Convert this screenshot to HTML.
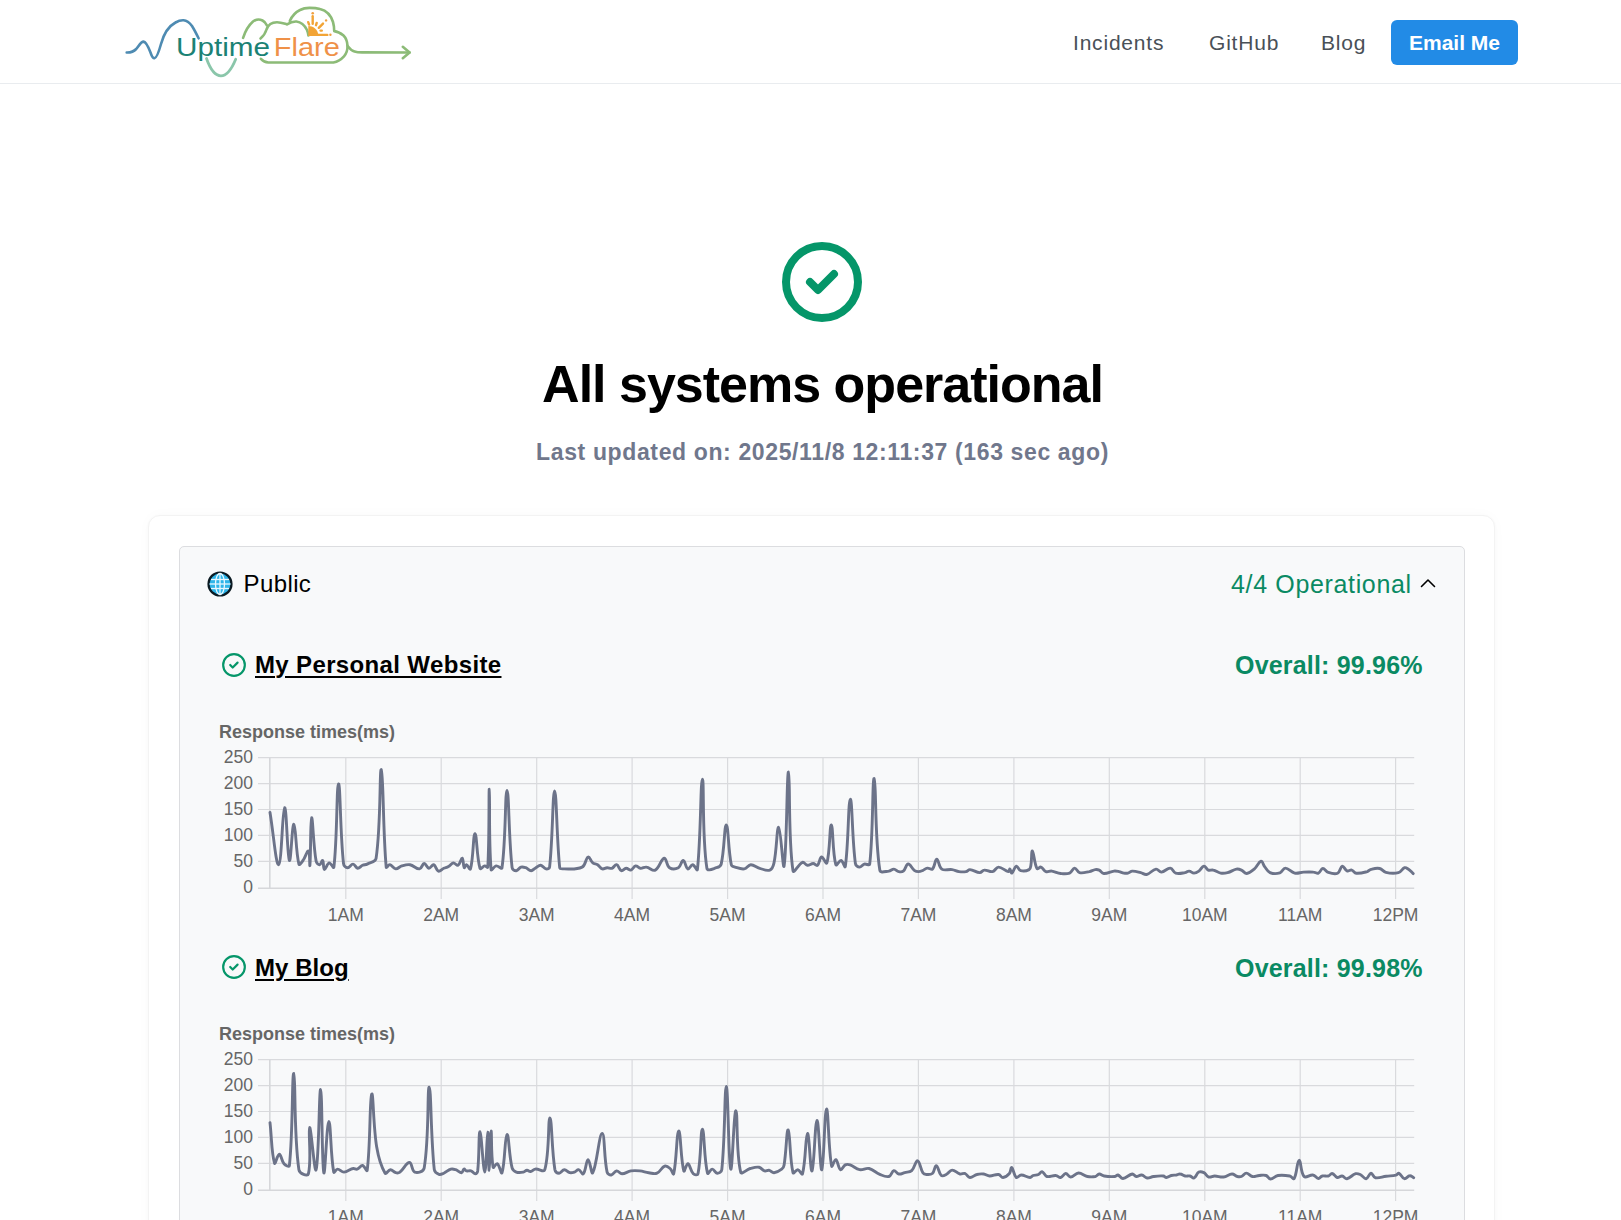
<!DOCTYPE html>
<html><head><meta charset="utf-8">
<style>
html,body{margin:0;padding:0;background:#fff;}
body{width:1621px;height:1220px;overflow:hidden;position:relative;font-family:"Liberation Sans",sans-serif;}
.t{position:absolute;white-space:nowrap;line-height:1;}
.hdr{position:absolute;left:0;top:0;width:1621px;height:83px;border-bottom:1px solid #e9ecef;background:#fff;}
.nav{font-size:21px;color:#495057;letter-spacing:0.8px;}
.btn{position:absolute;left:1391px;top:20px;width:127px;height:45px;background:#228be6;border-radius:6px;}
.card{position:absolute;left:148px;top:515px;width:1345px;height:800px;border-radius:12px;background:#fff;border:1px solid #f3f3f3;box-shadow:0 1px 3px rgba(0,0,0,0.03),0 0 14px rgba(0,0,0,0.025);}
.panel{position:absolute;left:179px;top:546px;width:1284px;height:800px;border-radius:5px;background:#f8f9fa;border:1px solid #dcdde0;}
svg{position:absolute;overflow:visible;}
</style></head>
<body>
<div class="hdr"></div>
<!-- logo placeholder -->
<svg id="logo" style="left:0;top:0" width="450" height="83" viewBox="0 0 450 83">
<text x="176" y="55.8" font-family="Liberation Sans, sans-serif" font-size="25.5" fill="#1b8275" textLength="94" lengthAdjust="spacingAndGlyphs">Uptime</text><text x="273.8" y="55.5" font-family="Liberation Sans, sans-serif" font-size="25" fill="#ef9148" textLength="66" lengthAdjust="spacingAndGlyphs">Flare</text>
<g fill="none" stroke-linecap="round" stroke-linejoin="round">
<path d="M126.7 52.5C130 52.6 133 52.4 136.2 49C139 45.5 141 41.6 143.5 41.6C146 41.8 148 46 150.5 52.5C152 57 153 58.5 154.5 58.3C156.5 58 158.5 53 161 44C164 33 169 26 175.5 22.5C179 20.5 181.5 20.2 183.5 20.3C186.5 20.5 189.5 22.5 192 26C194.5 30 196.5 34 198.6 38.3" stroke="#4e8bb2" stroke-width="2.6"/>
<path d="M206.5 58.5C209.5 67 213.5 75.8 220.9 75.8C228 75.8 232.5 67 235.7 59.2" stroke="#8ac6aa" stroke-width="2.8"/>
<g stroke="#8cbb77" stroke-width="2.6">
<path d="M243.1 37.8C245 32 249 25 253 21.5C256 19.2 259.5 19 262.5 20.5C264.5 21.5 266 23.2 266.8 25.2"/>
<path d="M260.5 38.5C263.5 36 265.5 33 266.5 29.5C268 25 272 22.2 277 22.2C281 22.2 284 23.5 287 24.4C290 22.5 293 21.3 296.4 21.5C301 22 305 26 307 30C308 32.5 308.4 34 308.4 35.5"/>
<path d="M289.8 21C292 16 296 12 300 10C303 8.4 306 7.9 309.5 7.9C313 7.9 316.5 8 320 9C326 10.5 331 15.5 333 22C334 25.5 334.2 28.5 334.2 31.1C337.5 31.4 340.5 33 343.5 35.5C346 38 347.3 41.5 347.5 45.9C347.6 50 346.5 53.5 344 56.3C341.5 59 338 61.5 333.4 62.5L268.3 62.5C265.5 62.3 263 61 260.9 58.8"/>
<path d="M347.5 45.9C349.5 48.5 351 50.5 354.5 51.5C357 52.3 359 52.4 362 52.4L409.6 52.5"/>
<path d="M402.8 46.8L409.6 52.5L402.8 58.2"/>
</g>
<g stroke="#f2a436" stroke-width="2.4">
<path d="M312.7 16.2L312.7 23.8"/><path d="M308.2 22.2L309.1 24.6"/><path d="M316.7 22.9L316 25.2"/><path d="M323 23.6L318.8 27.8"/><path d="M320.6 30.6L321.8 30.6"/><path d="M318 34.9L327.3 34.9"/>
</g>
</g>
<path d="M308.3 36L308.3 26C313 26 318.3 29 318.3 36Z" fill="#f2a436"/>
<g fill="#f0a040"><circle cx="312.7" cy="13.3" r="1.3"/><circle cx="326.1" cy="20.4" r="1.2"/><circle cx="330.4" cy="34.8" r="1.2"/></g>


</svg>

<div class="t nav" style="left:1073px;top:32px;">Incidents</div>
<div class="t nav" style="left:1209px;top:32px;">GitHub</div>
<div class="t nav" style="left:1321px;top:32px;">Blog</div>
<div class="btn"></div>
<div class="t" style="left:1409px;top:32px;font-size:21px;color:#fff;font-weight:bold;">Email Me</div>

<svg style="left:774px;top:234px" width="96" height="96" viewBox="0 0 24 24" fill="none" stroke="#059669" stroke-width="2" stroke-linecap="round" stroke-linejoin="round"><circle cx="12" cy="12" r="9"/><path d="M9 12l2 2l4 -4"/></svg>

<div class="t" style="left:0;width:1645px;text-align:center;top:358px;font-size:52px;font-weight:bold;color:#000;letter-spacing:-1px;">All systems operational</div>
<div class="t" style="left:1px;width:1643px;text-align:center;top:441px;font-size:23px;font-weight:bold;color:#70778c;letter-spacing:0.63px;">Last updated on: 2025/11/8 12:11:37 (163 sec ago)</div>

<div class="card"></div>
<div class="panel"></div>
<svg style="left:207px;top:571px" width="26" height="26" viewBox="0 0 26 26">
<circle cx="13" cy="13" r="11.5" fill="#2fb5e9" stroke="#0b1a22" stroke-width="2.2"/>
<g stroke="#e8f8ff" stroke-width="1.3" fill="none"><ellipse cx="13" cy="13" rx="4.5" ry="10.5"/><line x1="13" y1="2.5" x2="13" y2="23.5"/><line x1="2.5" y1="13" x2="23.5" y2="13"/><line x1="4" y1="8.5" x2="22" y2="8.5"/><line x1="4" y1="17.5" x2="22" y2="17.5"/></g>
</svg>
<div class="t" style="left:243.5px;top:572px;font-size:24px;color:#000;letter-spacing:0.4px;">Public</div>
<div class="t" style="left:1231px;top:572px;font-size:25px;color:#0a8a63;letter-spacing:0.65px;">4/4 Operational</div>
<svg style="left:1420px;top:578px" width="16" height="10" viewBox="0 0 16 10"><path d="M1.5 8.5L8 2l6.5 6.5" fill="none" stroke="#000" stroke-width="1.6" stroke-linecap="round" stroke-linejoin="round"/></svg>

<svg style="left:221px;top:652px" width="26" height="26" viewBox="0 0 24 24" fill="none" stroke="#059669" stroke-width="2" stroke-linecap="round" stroke-linejoin="round"><circle cx="12" cy="12" r="10"/><path d="M8.5 12l2.3 2.3l4.5 -4.5"/></svg>
<div class="t" style="left:255px;top:652.5px;font-size:24px;font-weight:bold;color:#000;letter-spacing:0.36px;text-decoration:underline;text-underline-offset:2.5px;text-decoration-thickness:2px;">My Personal Website</div>
<div class="t" style="left:1235px;top:653px;font-size:25px;font-weight:bold;color:#0a8a63;letter-spacing:0.19px;">Overall: 99.96%</div>
<div class="t" style="left:219px;top:722.5px;font-size:18px;font-weight:bold;color:#666;">Response times(ms)</div>

<svg style="left:221px;top:954px" width="26" height="26" viewBox="0 0 24 24" fill="none" stroke="#059669" stroke-width="2" stroke-linecap="round" stroke-linejoin="round"><circle cx="12" cy="12" r="10"/><path d="M8.5 12l2.3 2.3l4.5 -4.5"/></svg>
<div class="t" style="left:255px;top:955.5px;font-size:24px;font-weight:bold;color:#000;letter-spacing:0.05px;text-decoration:underline;text-underline-offset:2.5px;text-decoration-thickness:2px;">My Blog</div>
<div class="t" style="left:1235px;top:956px;font-size:25px;font-weight:bold;color:#0a8a63;letter-spacing:0.19px;">Overall: 99.98%</div>
<div class="t" style="left:219px;top:1024.5px;font-size:18px;font-weight:bold;color:#666;">Response times(ms)</div>


<!--CHARTS--><svg style="left:200px;top:745px" width="1250" height="200" viewBox="200 745 1250 200"><g stroke="#d9dadd" stroke-width="1.2" fill="none"><line x1="258" y1="757.7" x2="1414.2" y2="757.7"/><line x1="258" y1="783.6" x2="1414.2" y2="783.6"/><line x1="258" y1="809.5" x2="1414.2" y2="809.5"/><line x1="258" y1="835.4" x2="1414.2" y2="835.4"/><line x1="258" y1="861.4" x2="1414.2" y2="861.4"/><line x1="345.8" y1="757.7" x2="345.8" y2="899"/><line x1="441.2" y1="757.7" x2="441.2" y2="899"/><line x1="536.7" y1="757.7" x2="536.7" y2="899"/><line x1="632.1" y1="757.7" x2="632.1" y2="899"/><line x1="727.6" y1="757.7" x2="727.6" y2="899"/><line x1="823.0" y1="757.7" x2="823.0" y2="899"/><line x1="918.4" y1="757.7" x2="918.4" y2="899"/><line x1="1013.9" y1="757.7" x2="1013.9" y2="899"/><line x1="1109.3" y1="757.7" x2="1109.3" y2="899"/><line x1="1204.8" y1="757.7" x2="1204.8" y2="899"/><line x1="1300.2" y1="757.7" x2="1300.2" y2="899"/><line x1="1395.6" y1="757.7" x2="1395.6" y2="899"/></g><g stroke="#d6d7da" stroke-width="1.6" fill="none"><line x1="258" y1="888.2" x2="1414.2" y2="888.2"/><line x1="269.8" y1="757.7" x2="269.8" y2="888.2"/></g><g font-family="Liberation Sans, sans-serif" font-size="17.5" fill="#666"><text x="253" y="762.9" text-anchor="end">250</text><text x="253" y="788.8" text-anchor="end">200</text><text x="253" y="814.7" text-anchor="end">150</text><text x="253" y="840.6" text-anchor="end">100</text><text x="253" y="866.6" text-anchor="end">50</text><text x="253" y="893.4" text-anchor="end">0</text><text x="345.8" y="920.5" text-anchor="middle">1AM</text><text x="441.2" y="920.5" text-anchor="middle">2AM</text><text x="536.7" y="920.5" text-anchor="middle">3AM</text><text x="632.1" y="920.5" text-anchor="middle">4AM</text><text x="727.6" y="920.5" text-anchor="middle">5AM</text><text x="823.0" y="920.5" text-anchor="middle">6AM</text><text x="918.4" y="920.5" text-anchor="middle">7AM</text><text x="1013.9" y="920.5" text-anchor="middle">8AM</text><text x="1109.3" y="920.5" text-anchor="middle">9AM</text><text x="1204.8" y="920.5" text-anchor="middle">10AM</text><text x="1300.2" y="920.5" text-anchor="middle">11AM</text><text x="1395.6" y="920.5" text-anchor="middle">12PM</text></g><path d="M270.0 812.4C273.5 833.3 275.9 865.6 278.7 864.7C281.7 863.7 282.4 808.6 284.6 807.7C286.7 806.9 287.2 856.6 289.4 860.5C290.9 863.2 292.1 823.6 293.9 824.3C295.9 825.1 295.7 851.4 298.9 864.1C299.3 865.8 301.7 862.2 303.0 860.5C305.5 857.0 307.2 850.2 308.4 851.0C310.0 852.1 309.6 868.4 309.9 865.3C310.9 855.1 310.3 818.7 311.6 817.8C312.8 817.0 313.2 844.3 316.1 861.1C316.4 863.1 318.4 864.8 319.7 864.7C321.0 864.6 322.0 859.8 322.7 860.5C323.9 861.7 323.0 869.0 324.4 869.5C325.6 870.0 327.1 863.4 329.2 862.9C330.9 862.5 333.6 869.3 333.9 867.1C337.4 837.7 336.5 784.6 338.5 783.9C340.4 783.2 340.1 832.3 343.5 863.5C343.7 865.8 345.8 867.6 347.6 867.7C349.6 867.8 351.0 864.0 353.0 864.1C355.0 864.2 355.7 868.0 357.7 868.3C359.5 868.5 360.5 866.2 362.5 865.3C364.3 864.5 365.5 865.0 367.2 864.1C370.9 862.1 375.5 862.3 376.1 858.2C381.1 824.5 379.4 767.9 381.3 769.6C383.4 771.5 382.9 830.7 386.2 867.1C386.3 868.7 388.4 864.4 389.8 864.7C392.2 865.2 393.3 868.6 395.8 868.9C398.1 869.1 399.2 866.6 401.7 865.9C404.9 865.0 406.8 864.2 410.0 864.7C413.9 865.4 416.1 869.2 419.5 868.9C421.8 868.7 422.3 863.6 424.2 863.5C426.0 863.4 426.9 868.0 428.9 868.3C430.7 868.5 432.1 864.2 433.7 864.7C435.9 865.4 436.1 870.4 438.4 871.2C440.1 871.8 441.6 869.3 443.8 868.3C445.6 867.5 446.8 867.5 448.5 866.5C450.6 865.3 451.3 863.2 453.3 862.9C455.1 862.7 456.6 866.0 458.0 865.3C460.2 864.2 461.1 857.8 462.2 858.2C463.5 858.7 463.0 865.8 464.2 867.7C464.7 868.4 465.4 864.5 466.4 864.7C467.9 865.0 470.0 870.7 470.5 868.9C473.5 858.3 473.1 833.9 475.0 833.8C476.9 833.7 476.6 857.2 480.0 868.3C480.5 870.0 482.9 866.2 484.8 865.9C486.0 865.7 487.7 868.3 487.8 867.1C489.5 837.6 488.7 788.7 489.3 789.2C490.0 789.7 488.6 841.0 491.1 869.5C491.3 871.7 493.9 866.3 496.1 865.9C498.3 865.5 501.7 869.9 502.0 867.7C506.0 839.7 505.0 790.4 507.0 790.4C509.0 790.4 508.6 837.6 512.1 867.7C512.3 869.7 514.6 870.8 516.3 870.7C518.2 870.6 518.9 867.8 521.0 867.1C522.7 866.6 524.0 867.1 525.8 867.7C528.1 868.5 529.0 870.7 531.1 870.7C533.0 870.7 533.9 868.8 535.9 867.7C537.8 866.6 538.9 865.1 540.7 865.3C542.9 865.6 543.8 868.5 546.0 868.9C547.4 869.2 549.4 868.7 549.6 867.1C552.9 837.5 552.6 790.9 554.6 791.0C556.6 791.1 556.6 837.8 559.7 867.7C559.8 868.9 561.4 868.9 562.6 868.9C570.3 868.7 575.7 870.1 582.1 867.1C585.9 865.3 585.5 858.0 588.1 857.0C589.8 856.3 590.5 861.1 592.8 862.9C594.3 864.1 595.9 863.6 597.6 864.7C599.7 866.0 600.2 868.2 602.3 868.9C604.0 869.4 605.2 867.8 607.1 867.7C609.0 867.6 610.2 868.8 611.9 868.3C614.0 867.6 614.9 864.3 616.6 864.7C618.7 865.2 619.1 869.8 621.4 870.7C622.9 871.3 624.2 868.4 626.1 868.3C628.0 868.2 629.2 870.5 630.9 870.1C633.0 869.6 633.5 866.3 635.6 865.9C637.3 865.6 638.4 868.1 640.4 868.3C642.7 868.6 644.0 866.8 646.3 867.1C649.9 867.5 652.4 871.5 655.2 870.1C659.6 867.9 660.9 858.8 664.2 858.2C666.6 857.8 666.4 865.6 669.5 867.7C672.1 869.4 675.6 869.2 678.4 867.7C681.1 866.3 681.4 860.3 683.2 860.5C685.2 860.8 685.6 867.9 687.9 868.9C689.4 869.6 690.8 864.6 692.7 864.7C694.6 864.8 697.1 871.9 697.4 869.5C701.0 837.6 700.5 779.3 702.4 779.1C704.3 778.9 701.8 836.3 706.9 868.3C707.4 871.7 713.0 868.7 716.5 867.7C718.7 867.1 720.7 866.3 721.2 864.1C724.6 849.2 724.3 824.8 726.3 824.9C728.3 825.0 728.2 849.5 731.3 864.7C731.6 866.4 733.3 866.6 735.0 867.1C738.5 868.2 740.8 869.4 744.3 868.9C747.1 868.5 748.1 864.8 750.8 864.7C754.2 864.6 756.0 867.3 759.7 868.3C763.6 869.4 766.6 871.3 769.8 870.1C772.4 869.1 773.3 866.1 774.0 862.9C776.9 849.0 776.8 826.7 778.7 827.3C780.8 827.9 783.0 872.4 784.1 865.9C786.9 850.3 786.8 771.1 788.5 772.0C790.3 773.0 788.0 838.7 793.0 870.7C793.6 874.8 798.5 863.8 802.5 862.3C804.3 861.6 805.3 865.1 807.3 865.3C809.5 865.6 810.9 863.5 813.2 863.5C814.9 863.5 816.3 866.2 817.4 865.3C819.6 863.6 819.5 857.5 821.5 857.0C823.3 856.6 826.2 865.1 826.9 862.9C830.1 852.3 829.6 824.5 831.3 824.9C833.1 825.3 832.4 852.5 835.8 864.7C836.4 866.8 839.3 860.2 841.1 860.5C843.1 860.9 844.9 868.9 845.3 866.5C848.6 844.4 848.2 799.9 850.3 799.3C852.3 798.7 852.0 838.5 855.4 863.5C855.7 865.6 857.8 867.0 859.6 867.1C861.4 867.2 862.2 864.7 864.3 864.1C866.3 863.5 869.5 866.1 869.7 864.1C873.4 831.9 872.2 777.3 874.2 778.5C876.3 779.7 874.5 836.4 879.8 870.1C880.3 873.5 885.3 871.4 888.9 871.1C891.0 871.0 891.9 869.0 893.9 869.1C895.9 869.2 896.7 871.2 898.8 871.6C900.5 872.0 902.0 872.1 903.3 871.1C905.8 869.1 906.0 864.1 908.2 864.0C910.5 863.9 911.7 868.5 914.6 870.6C915.9 871.5 917.0 871.6 918.6 871.6C920.2 871.6 921.0 871.2 922.5 870.6C924.5 869.8 925.3 868.4 927.4 868.1C929.3 867.8 931.2 870.2 932.4 869.1C935.0 866.7 934.9 859.2 936.8 859.2C938.7 859.2 938.6 866.9 941.8 869.1C944.7 871.1 948.0 869.0 952.1 869.6C954.9 870.0 956.2 871.2 959.0 871.6C961.7 872.0 963.3 872.1 966.0 871.6C967.7 871.3 968.3 869.5 969.9 869.6C973.8 869.9 976.0 872.5 979.8 872.6C981.7 872.7 982.3 870.2 984.2 870.1C987.4 869.8 989.5 872.2 992.6 871.6C995.3 871.0 995.9 867.1 998.5 867.1C1002.3 867.1 1004.8 871.0 1008.4 871.6C1009.4 871.8 1009.3 868.9 1009.9 869.1C1010.7 869.5 1011.0 873.5 1011.9 873.1C1013.6 872.3 1014.3 866.7 1016.3 866.1C1017.8 865.7 1018.5 870.0 1020.7 870.6C1023.6 871.4 1026.5 871.0 1029.1 869.6C1030.6 868.8 1030.6 867.1 1030.9 865.2C1031.9 859.6 1031.3 850.3 1032.4 850.9C1033.8 851.7 1034.2 863.3 1037.0 868.6C1037.7 869.8 1039.6 866.6 1041.0 867.1C1043.2 867.8 1043.6 870.8 1045.9 871.6C1047.9 872.4 1049.5 870.8 1051.8 871.1C1055.4 871.6 1057.1 873.1 1060.7 873.5C1064.2 873.9 1066.5 874.3 1069.6 873.1C1072.1 872.1 1072.6 868.2 1074.6 868.1C1076.5 868.0 1077.1 872.0 1079.5 872.6C1083.0 873.4 1085.5 872.3 1089.4 871.6C1091.8 871.1 1092.9 870.0 1095.3 869.6C1096.8 869.4 1097.8 869.5 1099.2 870.1C1101.2 871.0 1101.6 873.4 1103.7 873.5C1107.6 873.8 1109.9 871.6 1114.0 871.1C1116.0 870.9 1117.0 871.2 1119.0 871.6C1121.0 872.0 1121.9 872.8 1123.9 873.1C1125.5 873.4 1126.4 873.5 1127.9 873.1C1129.7 872.7 1130.4 871.2 1132.3 871.1C1135.6 871.0 1137.4 871.8 1140.7 872.6C1143.1 873.2 1144.4 875.0 1146.6 874.5C1150.5 873.6 1152.2 869.7 1156.0 869.1C1158.1 868.8 1159.2 872.3 1161.4 872.1C1164.9 871.9 1167.0 867.9 1170.3 868.1C1172.8 868.3 1173.1 872.3 1175.7 873.1C1179.0 874.1 1181.4 873.2 1185.1 872.6C1186.8 872.4 1187.5 871.0 1189.1 871.1C1191.1 871.2 1192.0 873.1 1194.0 873.1C1196.0 873.1 1197.2 872.3 1198.9 871.1C1201.2 869.5 1201.9 866.3 1203.9 866.1C1205.6 865.9 1206.3 869.2 1208.3 870.1C1210.0 870.8 1211.4 869.6 1213.3 870.1C1216.4 870.8 1217.6 872.6 1220.7 873.1C1223.4 873.6 1224.9 873.3 1227.6 872.6C1231.3 871.7 1232.9 869.8 1236.5 869.1C1238.4 868.8 1239.6 869.3 1241.4 870.1C1243.7 871.1 1244.6 873.7 1246.8 873.5C1249.7 873.3 1251.6 871.3 1254.2 869.1C1257.3 866.4 1258.5 861.8 1261.1 861.2C1262.7 860.8 1263.0 864.6 1264.6 866.6C1266.6 869.1 1267.3 871.5 1270.0 872.6C1273.4 874.0 1276.4 873.9 1279.9 872.9C1282.5 872.1 1282.9 868.1 1285.3 868.1C1288.8 868.1 1290.7 872.2 1294.7 873.1C1298.0 873.8 1300.0 872.3 1303.6 872.1C1307.5 871.9 1309.6 871.8 1313.5 872.1C1315.5 872.2 1316.8 873.7 1318.4 873.1C1320.5 872.3 1320.9 868.6 1322.8 868.5C1324.8 868.4 1325.8 871.6 1328.3 872.4C1331.7 873.5 1334.7 874.5 1337.6 873.2C1340.3 872.0 1340.2 866.7 1342.3 866.2C1343.9 865.8 1344.8 869.9 1347.0 870.8C1348.6 871.5 1350.0 869.7 1351.7 870.1C1353.7 870.6 1354.2 873.0 1356.3 873.2C1360.4 873.6 1363.0 872.7 1367.2 871.6C1368.9 871.1 1369.4 869.7 1371.1 869.3C1374.4 868.5 1376.5 867.8 1379.7 868.5C1382.4 869.1 1383.1 871.8 1385.9 872.4C1390.6 873.5 1393.8 873.8 1398.4 872.7C1401.3 872.0 1402.0 868.6 1404.6 867.7C1406.0 867.2 1407.1 868.4 1408.5 869.3C1410.6 870.7 1411.3 871.9 1413.2 873.6" fill="none" stroke="#6c7389" stroke-width="2.9" stroke-linejoin="round" stroke-linecap="round"/></svg>
<svg style="left:200px;top:1047px" width="1250" height="200" viewBox="200 745 1250 200"><g stroke="#d9dadd" stroke-width="1.2" fill="none"><line x1="258" y1="757.7" x2="1414.2" y2="757.7"/><line x1="258" y1="783.6" x2="1414.2" y2="783.6"/><line x1="258" y1="809.5" x2="1414.2" y2="809.5"/><line x1="258" y1="835.4" x2="1414.2" y2="835.4"/><line x1="258" y1="861.4" x2="1414.2" y2="861.4"/><line x1="345.8" y1="757.7" x2="345.8" y2="899"/><line x1="441.2" y1="757.7" x2="441.2" y2="899"/><line x1="536.7" y1="757.7" x2="536.7" y2="899"/><line x1="632.1" y1="757.7" x2="632.1" y2="899"/><line x1="727.6" y1="757.7" x2="727.6" y2="899"/><line x1="823.0" y1="757.7" x2="823.0" y2="899"/><line x1="918.4" y1="757.7" x2="918.4" y2="899"/><line x1="1013.9" y1="757.7" x2="1013.9" y2="899"/><line x1="1109.3" y1="757.7" x2="1109.3" y2="899"/><line x1="1204.8" y1="757.7" x2="1204.8" y2="899"/><line x1="1300.2" y1="757.7" x2="1300.2" y2="899"/><line x1="1395.6" y1="757.7" x2="1395.6" y2="899"/></g><g stroke="#d6d7da" stroke-width="1.6" fill="none"><line x1="258" y1="888.2" x2="1414.2" y2="888.2"/><line x1="269.8" y1="757.7" x2="269.8" y2="888.2"/></g><g font-family="Liberation Sans, sans-serif" font-size="17.5" fill="#666"><text x="253" y="762.9" text-anchor="end">250</text><text x="253" y="788.8" text-anchor="end">200</text><text x="253" y="814.7" text-anchor="end">150</text><text x="253" y="840.6" text-anchor="end">100</text><text x="253" y="866.6" text-anchor="end">50</text><text x="253" y="893.4" text-anchor="end">0</text><text x="345.8" y="920.5" text-anchor="middle">1AM</text><text x="441.2" y="920.5" text-anchor="middle">2AM</text><text x="536.7" y="920.5" text-anchor="middle">3AM</text><text x="632.1" y="920.5" text-anchor="middle">4AM</text><text x="727.6" y="920.5" text-anchor="middle">5AM</text><text x="823.0" y="920.5" text-anchor="middle">6AM</text><text x="918.4" y="920.5" text-anchor="middle">7AM</text><text x="1013.9" y="920.5" text-anchor="middle">8AM</text><text x="1109.3" y="920.5" text-anchor="middle">9AM</text><text x="1204.8" y="920.5" text-anchor="middle">10AM</text><text x="1300.2" y="920.5" text-anchor="middle">11AM</text><text x="1395.6" y="920.5" text-anchor="middle">12PM</text></g><path d="M270.0 820.7C271.8 836.9 271.5 851.0 274.5 861.1C275.2 863.6 277.4 852.1 279.3 852.2C281.2 852.3 281.4 858.8 284.0 861.7C285.4 863.3 289.2 865.6 289.4 863.5C293.1 829.5 291.9 770.6 293.8 771.4C295.7 772.3 293.6 831.4 298.9 867.7C299.5 871.6 307.6 874.9 308.4 871.8C311.9 858.0 308.0 826.4 309.6 825.5C311.1 824.7 314.6 873.0 316.1 867.7C319.0 857.8 319.1 786.9 320.6 787.5C322.2 788.1 321.8 862.8 323.8 870.7C325.1 875.6 326.8 819.6 328.8 819.5C330.8 819.4 330.5 852.7 333.7 870.1C334.0 871.8 335.8 867.1 337.5 867.1C340.0 867.1 341.4 870.2 344.0 870.1C347.6 870.0 349.3 867.3 353.0 866.5C354.6 866.1 355.6 867.6 357.1 867.1C359.4 866.4 360.5 863.3 362.5 863.5C364.6 863.7 366.9 870.6 367.2 868.3C370.6 842.1 369.5 797.7 371.7 792.2C373.3 788.4 373.2 824.3 376.7 845.1C378.5 855.9 380.7 863.9 385.1 871.2C386.1 872.9 388.2 867.8 390.4 867.7C392.5 867.6 393.5 870.1 395.8 870.7C397.3 871.1 398.6 871.1 399.9 870.1C404.1 867.0 406.1 860.5 409.4 860.5C412.1 860.5 411.7 869.0 414.8 870.1C417.7 871.1 423.6 869.7 424.2 865.9C429.3 835.7 427.2 784.7 429.2 785.1C431.2 785.5 430.7 835.4 434.3 867.7C434.6 870.3 436.8 871.6 439.0 872.4C440.6 873.0 442.0 872.0 443.8 871.2C446.8 869.9 447.9 868.0 450.9 867.1C452.7 866.6 453.9 867.1 455.7 867.7C458.2 868.5 459.6 870.8 461.6 870.7C462.9 870.6 462.9 867.5 464.0 867.1C464.8 866.8 465.3 868.6 466.4 868.9C468.1 869.3 469.4 868.3 471.1 868.9C473.0 869.5 473.8 871.8 475.3 871.8C476.4 871.8 477.5 870.4 477.7 868.9C479.4 853.5 478.6 829.4 480.0 829.6C481.4 829.8 483.2 870.0 484.8 870.1C486.3 870.2 486.9 830.6 487.8 830.2C488.7 829.8 488.5 868.5 489.2 868.3C489.9 868.1 490.3 829.7 491.1 829.1C491.8 828.5 490.9 854.0 493.1 865.3C493.4 867.0 496.0 860.9 497.3 861.7C499.6 863.1 501.2 873.1 502.0 870.7C505.1 861.5 504.8 833.6 507.0 832.6C508.9 831.7 508.9 853.1 512.1 865.9C512.7 868.1 514.2 869.3 516.3 870.1C518.8 871.0 520.7 870.6 523.4 870.1C524.9 869.8 525.5 868.4 527.0 868.3C528.4 868.2 529.1 869.7 530.5 869.5C532.5 869.2 533.2 867.4 535.3 867.1C539.0 866.6 543.9 870.9 544.8 867.7C549.7 850.4 547.9 816.0 549.9 816.0C551.9 816.0 551.6 847.7 554.9 867.7C555.3 869.8 557.3 871.2 559.1 871.2C561.1 871.2 562.2 867.8 564.4 867.7C566.5 867.6 567.5 870.2 569.8 870.7C571.6 871.1 572.7 870.7 574.5 870.1C576.3 869.5 577.1 867.4 578.6 867.7C580.6 868.1 582.2 873.0 583.3 871.8C586.0 868.9 586.1 857.8 588.1 857.6C589.9 857.4 591.4 873.4 592.8 870.7C597.0 862.9 599.2 831.5 602.1 831.4C604.9 831.3 603.8 855.4 607.1 870.1C607.5 872.0 609.7 873.2 611.3 873.0C613.5 872.7 614.4 869.2 616.6 868.9C618.6 868.7 619.7 871.8 622.0 871.8C625.5 871.8 627.3 869.5 630.9 868.9C634.4 868.3 636.3 868.5 639.8 868.9C643.4 869.3 645.1 870.2 648.7 870.7C652.0 871.1 654.2 872.4 657.0 871.2C660.6 869.7 661.4 865.3 664.7 864.1C666.6 863.4 668.4 865.0 670.1 866.5C672.0 868.1 673.3 873.7 673.7 871.8C676.7 858.8 676.6 829.7 678.7 829.1C680.7 828.5 680.7 858.1 683.8 868.9C684.4 871.1 686.3 861.2 687.9 861.7C690.1 862.4 690.4 868.9 693.3 871.8C694.5 873.0 697.7 873.5 698.0 871.8C701.3 855.7 700.5 827.4 702.4 827.3C704.3 827.2 704.0 857.3 707.5 871.2C708.0 873.2 710.4 867.1 712.3 867.1C714.2 867.1 715.1 871.1 717.1 871.2C718.9 871.3 721.6 870.0 721.8 867.7C725.2 835.3 724.5 784.6 726.3 784.5C728.1 784.4 728.5 861.4 730.7 867.1C732.3 871.1 733.9 808.2 735.9 808.8C737.9 809.4 735.8 850.3 740.7 870.1C741.5 873.4 746.3 867.5 750.2 866.5C753.7 865.6 755.8 864.7 759.1 865.3C761.5 865.7 762.2 868.2 764.5 868.9C766.2 869.4 767.4 868.0 769.2 868.3C771.2 868.7 772.1 870.9 774.0 870.7C777.1 870.4 779.1 869.1 781.7 867.1C783.2 866.0 783.8 864.8 784.1 862.9C786.4 849.1 786.6 826.5 788.2 827.9C790.2 829.6 789.6 856.6 793.0 870.7C793.4 872.5 796.0 867.5 797.8 867.7C799.8 867.9 802.0 873.7 802.5 871.8C805.9 859.2 805.5 832.0 807.5 831.4C809.3 830.8 810.4 871.1 812.0 868.9C814.2 865.9 815.0 818.6 817.0 818.4C818.9 818.2 820.1 869.7 821.8 867.7C823.9 865.2 824.5 807.8 826.5 807.1C828.4 806.4 828.3 846.3 831.6 864.1C832.0 866.5 834.3 857.0 835.8 857.6C837.9 858.5 838.2 866.4 840.6 867.7C842.0 868.5 843.1 864.0 845.3 862.9C846.9 862.1 848.3 862.3 850.1 862.9C854.0 864.2 855.6 866.9 859.6 867.7C863.2 868.4 865.5 865.7 869.1 866.5C873.6 867.6 875.3 870.6 879.8 872.4C883.2 873.8 885.8 875.3 888.9 874.5C891.5 873.8 891.7 869.2 893.9 868.6C895.6 868.2 896.7 871.6 898.8 872.0C901.0 872.4 902.4 871.2 904.7 870.6C907.5 869.9 909.7 870.4 911.7 868.6C914.9 865.7 915.5 858.4 917.6 858.8C920.0 859.3 920.2 866.7 923.0 871.0C923.8 872.2 925.0 872.4 926.5 872.5C928.8 872.6 930.8 872.9 932.4 871.5C934.7 869.4 934.7 863.2 936.3 863.6C938.3 864.0 938.6 871.0 941.3 873.5C942.5 874.6 944.5 873.4 946.2 872.5C948.8 871.2 949.6 868.2 952.1 868.1C955.1 868.0 956.7 871.1 960.0 872.0C961.9 872.5 963.2 870.9 965.0 871.5C967.2 872.3 967.7 875.3 969.9 875.5C972.5 875.7 973.9 873.2 976.8 872.5C979.4 871.8 981.0 871.7 983.7 872.0C986.1 872.3 987.2 873.9 989.6 874.0C993.1 874.1 995.1 872.1 998.5 872.5C1000.5 872.7 1001.2 875.7 1003.0 875.5C1005.5 875.3 1007.5 873.7 1009.4 871.5C1011.0 869.7 1010.7 865.0 1011.7 865.6C1013.4 866.6 1013.8 873.5 1016.3 875.5C1017.6 876.5 1019.1 873.0 1021.2 873.0C1024.7 873.0 1026.7 875.4 1030.1 875.5C1031.4 875.6 1031.8 874.0 1033.1 873.5C1035.1 872.8 1036.6 873.4 1038.5 872.5C1040.1 871.8 1040.7 869.3 1042.0 869.6C1044.0 870.1 1044.5 873.8 1046.9 874.5C1050.0 875.4 1052.3 873.2 1055.8 873.5C1057.9 873.6 1058.9 875.9 1060.7 875.5C1062.9 875.1 1063.7 871.6 1065.7 871.5C1067.6 871.4 1068.5 875.1 1070.6 875.0C1073.6 874.9 1075.3 871.1 1078.5 871.0C1082.0 870.9 1083.7 873.7 1087.4 874.5C1090.4 875.1 1092.3 875.1 1095.3 874.5C1097.0 874.1 1097.6 872.1 1099.2 872.0C1101.1 871.9 1102.1 873.7 1104.2 874.0C1108.4 874.7 1110.8 874.8 1115.0 874.5C1116.3 874.4 1116.9 872.7 1118.0 873.0C1120.0 873.5 1120.8 876.6 1122.9 876.5C1126.5 876.2 1128.6 872.6 1132.3 872.0C1134.0 871.8 1134.6 874.3 1136.3 874.5C1138.3 874.7 1139.6 872.7 1141.7 873.0C1144.0 873.3 1144.8 875.7 1147.1 876.0C1149.5 876.3 1150.9 874.8 1153.5 874.5C1157.4 874.0 1159.5 873.7 1163.4 874.0C1164.7 874.1 1165.2 875.6 1166.4 875.5C1168.3 875.4 1169.3 874.0 1171.3 873.5C1173.2 873.0 1174.3 873.3 1176.2 873.0C1177.8 872.7 1178.6 871.8 1180.2 872.0C1182.2 872.2 1183.1 873.6 1185.1 874.0C1187.0 874.4 1188.1 873.6 1190.0 874.0C1191.7 874.4 1192.7 876.6 1194.0 876.0C1196.2 875.0 1196.5 871.4 1198.9 870.1C1200.5 869.2 1202.2 869.8 1203.9 870.6C1206.1 871.7 1206.5 874.3 1208.8 875.0C1210.9 875.6 1212.3 874.0 1214.7 874.0C1218.2 874.0 1220.1 875.4 1223.6 875.0C1227.1 874.6 1228.7 872.1 1232.0 872.0C1234.2 871.9 1235.2 873.9 1237.4 874.5C1238.9 874.9 1240.0 875.0 1241.4 874.5C1243.5 873.7 1244.3 871.1 1246.3 871.1C1248.6 871.1 1249.7 874.0 1252.3 874.5C1254.9 875.0 1256.4 873.7 1259.2 873.5C1261.9 873.3 1263.6 872.7 1266.1 873.5C1268.1 874.1 1268.6 877.0 1270.5 877.0C1273.3 877.0 1274.8 874.0 1277.9 873.5C1282.5 872.8 1285.2 873.2 1289.8 874.0C1291.7 874.4 1293.4 877.8 1294.2 876.5C1297.1 871.5 1297.0 858.7 1299.1 858.3C1301.0 857.9 1300.5 870.7 1304.1 874.5C1306.0 876.5 1309.7 872.5 1313.0 873.0C1315.4 873.3 1316.2 876.3 1318.4 876.5C1320.0 876.7 1320.6 874.4 1322.3 874.0C1324.5 873.4 1326.1 874.6 1328.3 874.0C1330.0 873.6 1330.7 871.2 1332.2 871.5C1334.3 871.8 1335.0 874.9 1337.2 875.5C1339.0 875.9 1340.2 873.8 1342.1 874.0C1344.1 874.2 1345.0 877.0 1346.9 876.7C1350.4 876.1 1352.0 872.8 1355.7 871.7C1357.5 871.2 1358.8 871.9 1360.6 872.7C1363.0 873.9 1364.1 877.0 1366.1 876.7C1368.3 876.4 1369.0 871.5 1371.0 871.3C1372.7 871.1 1373.2 875.3 1375.4 875.7C1379.3 876.4 1381.9 874.7 1386.2 874.2C1390.1 873.7 1392.2 874.1 1396.0 873.2C1397.4 872.9 1397.9 870.9 1399.0 871.3C1401.3 872.3 1402.0 876.2 1404.4 876.7C1406.3 877.1 1407.6 873.9 1409.8 873.7C1411.3 873.5 1412.1 874.9 1413.7 875.7" fill="none" stroke="#6c7389" stroke-width="2.9" stroke-linejoin="round" stroke-linecap="round"/></svg><!--/CHARTS-->
</body></html>
